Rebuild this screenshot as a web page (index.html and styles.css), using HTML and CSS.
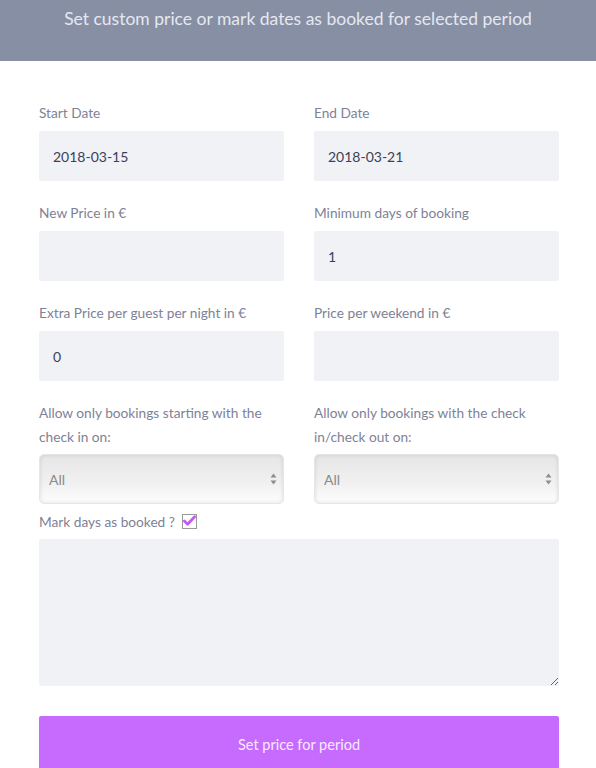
FILE: index.html
```html
<!DOCTYPE html>
<html>
<head>
<meta charset="utf-8">
<link rel="stylesheet" href="styles.css">
</head>
<body>
<div class="header">Set custom price or mark dates as booked for selected period</div>
<form class="form">
  <div class="grid">
    <div class="field">
      <label class="label">Start Date</label>
      <input class="input" type="text" value="2018-03-15">
    </div>
    <div class="field">
      <label class="label">End Date</label>
      <input class="input" type="text" value="2018-03-21">
    </div>
    <div class="field">
      <label class="label">New Price in €</label>
      <input class="input" type="text" value="">
    </div>
    <div class="field">
      <label class="label">Minimum days of booking</label>
      <input class="input" type="text" value="1">
    </div>
    <div class="field">
      <label class="label">Extra Price per guest per night in €</label>
      <input class="input" type="text" value="0">
    </div>
    <div class="field">
      <label class="label">Price per weekend in €</label>
      <input class="input" type="text" value="">
    </div>
    <div class="field">
      <label class="label">Allow only bookings starting with the check in on:</label>
      <div class="select-wrap">
        <select class="select"><option>All</option></select>
        <span class="arrows"><svg width="7" height="12" viewBox="0 0 7 12"><path d="M3.5 0.5 L6.5 4.5 L0.5 4.5 Z" fill="#8d8d8d"/><path d="M3.5 11.5 L6.5 7.5 L0.5 7.5 Z" fill="#8d8d8d"/></svg></span>
      </div>
    </div>
    <div class="field">
      <label class="label">Allow only bookings with the check in/check out on:</label>
      <div class="select-wrap">
        <select class="select"><option>All</option></select>
        <span class="arrows"><svg width="7" height="12" viewBox="0 0 7 12"><path d="M3.5 0.5 L6.5 4.5 L0.5 4.5 Z" fill="#8d8d8d"/><path d="M3.5 11.5 L6.5 7.5 L0.5 7.5 Z" fill="#8d8d8d"/></svg></span>
      </div>
    </div>
  </div>
  <div class="booked">
    <span class="label-inline">Mark days as booked ?</span>
    <span class="check"><svg width="14" height="12" viewBox="0 0 14 12"><path d="M1.5 6 L5 9.5 L12.5 1.5" fill="none" stroke="#c45cf5" stroke-width="3" stroke-linecap="round" stroke-linejoin="round"/></svg></span>
  </div>
  <textarea class="textarea"></textarea>
  <button class="button" type="button">Set price for period</button>
</form>
</body>
</html>
```

FILE: styles.css
```css
* { box-sizing: border-box; }
html, body { margin: 0; padding: 0; background: #fff; }
body {
  font-family: "Lato", "Open Sans", sans-serif;
  width: 596px;
  overflow: hidden;
}
.header {
  height: 61px;
  background: #878fa4;
  color: #e5e8f0;
  font-size: 17.5px;
  text-align: center;
  padding-top: 7px;
  line-height: 24px;
}
.form {
  padding: 40px 37px 0 39px;
}
.grid {
  display: grid;
  grid-template-columns: 245px 245px;
  column-gap: 30px;
  row-gap: 20px;
}
.field {
  display: flex;
  flex-direction: column;
}
.label {
  font-size: 13.7px;
  color: #7e8296;
  line-height: 24px;
  margin-bottom: 6px;
}
.input {
  height: 50px;
  border: none;
  border-radius: 2px;
  background: #f0f2f6;
  padding: 0 14px;
  font-family: inherit;
  font-size: 14px;
  color: #3c4057;
  outline: none;
}
.select-wrap {
  position: relative;
  height: 50px;
  margin-top: -1px;
}
.select {
  appearance: none;
  -webkit-appearance: none;
  width: 100%;
  height: 50px;
  border: 1px solid #e6e6e6;
  border-radius: 5px;
  background: linear-gradient(#e6e6e6, #f1f1f1 60%, #fdfdfd);
  box-shadow: inset 0 0 4px rgba(0,0,0,0.12);
  padding: 0 9px;
  font-family: inherit;
  font-size: 14px;
  color: #8a8a8a;
}
.arrows {
  position: absolute;
  right: 7px;
  top: 19px;
  line-height: 0;
}
.booked {
  display: flex;
  align-items: center;
  height: 24px;
  margin-top: 5px;
  margin-bottom: 6px;
}
.label-inline {
  font-size: 13.7px;
  color: #7e8296;
}
.check {
  margin-left: 7px;
  width: 15px;
  height: 15px;
  border: 1px solid #9a9a9a;
  display: flex;
  align-items: center;
  justify-content: center;
}
.textarea {
  display: block;
  width: 520px;
  height: 147px;
  border: none;
  border-radius: 2px;
  background: #f0f2f6;
  resize: vertical;
  outline: none;
}
.button {
  display: block;
  margin-top: 30px;
  width: 520px;
  height: 60px;
  border: none;
  border-radius: 2px 2px 0 0;
  background: #c76bfe;
  color: #f6eaff;
  font-family: inherit;
  font-size: 14.5px;
  padding: 0 0 4px 0;
}
```
